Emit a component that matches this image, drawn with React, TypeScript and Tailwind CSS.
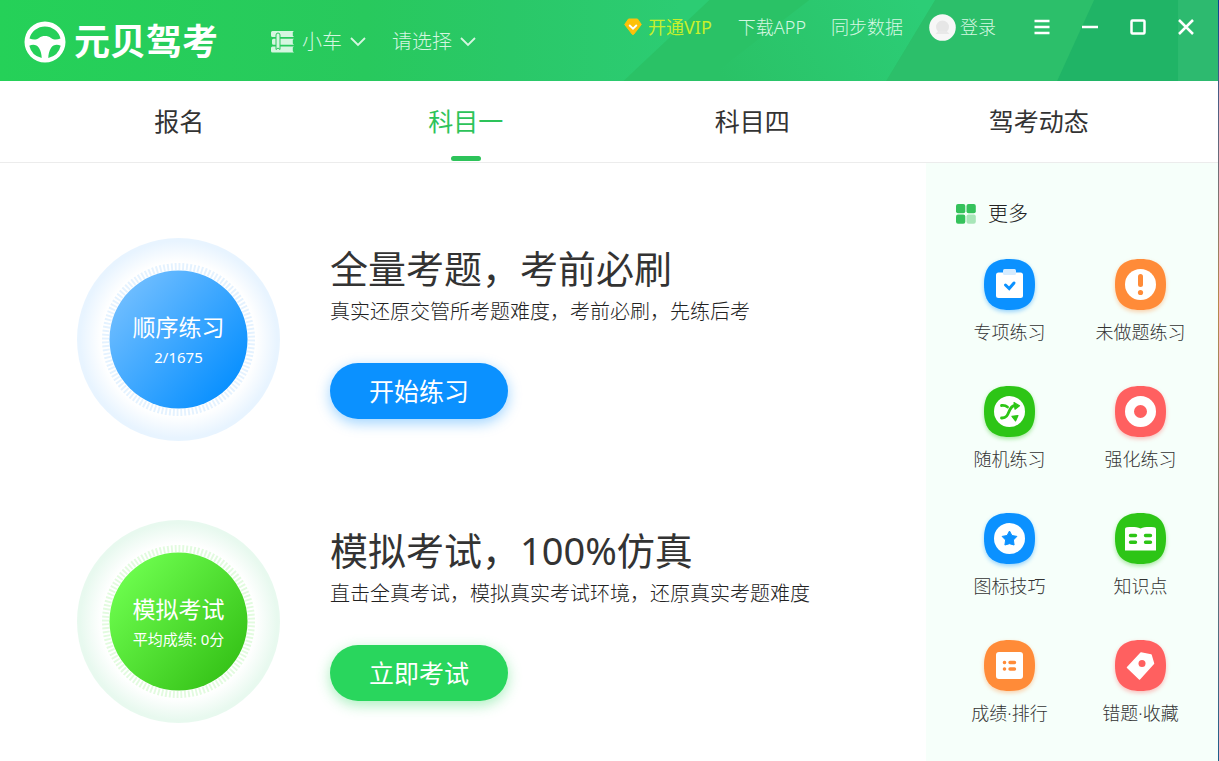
import { ReactNode } from "react";

const subjects = ["报名", "科目一", "科目四", "驾考动态"];

const Chevron = () => (
  <svg
    className="pointer-events-none absolute right-0 top-1/2 -translate-y-1/2"
    width="16"
    height="10"
    viewBox="0 0 16 10"
    fill="none"
    stroke="#d5f6e0"
    strokeWidth="1.8"
  >
    <path d="M1 1l7 7 7-7" />
  </svg>
);

const HeaderBackground = () => (
  <svg
    className="absolute inset-0 h-full w-full"
    viewBox="0 0 1219 81"
    preserveAspectRatio="none"
    aria-hidden="true"
  >
    <defs>
      <linearGradient id="base" x1="0" y1="0" x2="1" y2="0">
        <stop offset="0" stopColor="#25d158" />
        <stop offset="0.3" stopColor="#28c95d" />
        <stop offset="0.42" stopColor="#2ac868" />
        <stop offset="0.56" stopColor="#2ccc73" />
      </linearGradient>
      <linearGradient id="facet" x1="0" y1="0.6" x2="1" y2="0.4">
        <stop offset="0" stopColor="#2ac266" />
        <stop offset="1" stopColor="#2ccd76" />
      </linearGradient>
    </defs>
    <rect width="1219" height="81" fill="url(#base)" />
    <path d="M710 0h509v81H624z" fill="#2ac266" />
    <path d="M810 0h126l-49 81H705z" fill="url(#facet)" />
    <path d="M936 0h283v81H887z" fill="#2cbf6a" />
    <path d="M1095 0h124v81h-161z" fill="#20b466" />
    <path d="M1179 0h40v81h-40z" fill="#2dba6f" />
  </svg>
);

const Logo = () => (
  <div className="flex items-center gap-2">
    <svg width="42" height="42" viewBox="0 0 42 42" aria-hidden="true">
      <path
        fill="#fff"
        fillRule="evenodd"
        d="M21 .5a20.500 20.500 0 010 41 20.500 20.500 0 010-41zM5.500 17.500C9 18.800 12 19 15 17c3.500-2.600 8.500-2.600 12 0 3 2 6 1.800 9.500.5A16 16 0 005.500 17.500zM5.300 24.800C8.500 23 13 23.500 15 27c1.800 3 2.700 6.500 2.700 10A16.300 16.300 0 015.300 24.800zM36.700 24.800C33.500 23 29 23.500 27 27c-1.800 3-2.700 6.500-2.700 10A16.300 16.300 0 0036.700 24.800z"
      />
    </svg>
    <span className="text-4xl font-bold leading-[42px] text-white">元贝驾考</span>
  </div>
);

const BooksIcon = () => (
  <svg width="23" height="22" viewBox="0 0 23 22" aria-hidden="true">
    <path
      fill="#d5f6e0"
      d="M1.500 0H23l-1.200 1v3.800L23 6H1.500A1.500 1.500 0 010 4.500v-3A1.500 1.500 0 011.500 0zM2.500 7.800H23l-1.200 1v3.800l1.200 1.200H2.500A1.500 1.500 0 011 12.300v-3a1.500 1.500 0 011.500-1.500zM1.500 15.500H23l-1.200 1v3.800l1.200 1.200H1.500A1.500 1.500 0 010 20v-3a1.500 1.500 0 011.500-1.500z"
    />
    <path
      d="M5 4a2 2 0 014 0v14.500l-2-1.500-2 1.500z"
      fill="#d5f6e0"
      stroke="#2ac95e"
      strokeWidth="1"
    />
  </svg>
);

const HeaderSelect = ({ label, options }: { label: string; options: string[] }) => (
  <div className="relative">
    <select
      aria-label={label}
      className="block appearance-none bg-transparent pr-6 text-xl font-light leading-7 text-[#d5f6e0] outline-none"
    >
      {options.map((o) => (
        <option key={o}>{o}</option>
      ))}
    </select>
    <Chevron />
  </div>
);

const WindowButton = ({ label, children }: { label: string; children: ReactNode }) => (
  <button type="button" aria-label={label} className="flex h-7 w-12 items-center justify-center">
    <svg width="18" height="18" viewBox="0 0 18 18" fill="none" stroke="#fff" strokeWidth="2.5">
      {children}
    </svg>
  </button>
);

const Header = () => (
  <header className="relative h-[81px]">
    <HeaderBackground />
    <div className="relative flex items-start pl-6 pr-2">
      <div className="flex items-center pt-[21px]">
        <Logo />
        <div className="ml-[53px] flex items-center gap-2">
          <BooksIcon />
          <HeaderSelect label="车型" options={["小车"]} />
          <div className="ml-[18px]">
            <HeaderSelect label="地区" options={["请选择"]} />
          </div>
        </div>
      </div>

      <div className="ml-auto flex items-center pt-[13px] text-lg font-light leading-7 text-[#d5f8e2]">
        <a href="#vip" className="flex items-center gap-1.5 font-normal text-[#c6f02c]">
          <svg width="18" height="18" viewBox="0 0 18 18" aria-hidden="true">
            <path
              d="M4.500 1h9L17.300 6.500 9.700 16.300a1 1 0 01-1.400 0L.700 6.500z"
              fill="#fdc10a"
              stroke="#fdc10a"
              strokeLinejoin="round"
            />
            <path d="M5.200 7l3.800 3.700L12.800 7" fill="none" stroke="#fff" strokeWidth="1.800" />
          </svg>
          开通VIP
        </a>
        <a href="#app" className="ml-[26px]">
          下载APP
        </a>
        <a href="#sync" className="ml-[25px]">
          同步数据
        </a>
        <a href="#login" className="ml-[26px] flex items-center gap-1">
          <svg width="27" height="27" viewBox="0 0 27 27" aria-hidden="true">
            <circle cx="13.500" cy="13.500" r="13.300" fill="#f7f7f7" />
            <circle cx="13.500" cy="13" r="6.500" fill="#e6e6e6" />
            <path d="M6.500 20c2-3 4-3.500 7-3.500s5 .5 7 3.500z" fill="#e9e9e9" />
          </svg>
          登录
        </a>
        <div className="ml-[22px] flex">
          <WindowButton label="菜单">
            <path d="M1.500 3h15M1.500 9h15M1.500 15h15" />
          </WindowButton>
          <WindowButton label="最小化">
            <path d="M1 9h16" />
          </WindowButton>
          <WindowButton label="最大化">
            <rect x="2.500" y="2.500" width="13" height="13" rx="1" />
          </WindowButton>
          <WindowButton label="关闭">
            <path d="M2 2l14 14M16 2L2 16" />
          </WindowButton>
        </div>
      </div>
    </div>
  </header>
);

const Dial = ({
  id,
  title,
  detail,
  from,
  to,
  halo,
  tick,
}: {
  id: string;
  title: string;
  detail: string;
  from: string;
  to: string;
  halo: string;
  tick: string;
}) => (
  <div className="grid shrink-0 place-items-center">
    <svg className="col-start-1 row-start-1" width="203" height="203" viewBox="0 0 203 203">
      <defs>
        <linearGradient id={id} x1="0.1" y1="0.2" x2="0.85" y2="0.85">
          <stop offset="0" stopColor={from} />
          <stop offset="1" stopColor={to} />
        </linearGradient>
        <radialGradient id={`${id}-halo`}>
          <stop offset="0.76" stopColor="#fff" />
          <stop offset="0.97" stopColor={halo} />
        </radialGradient>
      </defs>
      <circle cx="101.500" cy="101.500" r="101.500" fill={`url(#${id}-halo)`} />
      <circle
        cx="101.500"
        cy="101.500"
        r="73"
        fill="none"
        stroke={tick}
        strokeWidth="7"
        pathLength="240"
        strokeDasharray="1 1"
      />
      <circle cx="101.500" cy="101.500" r="69" fill={`url(#${id})`} />
    </svg>
    <div className="col-start-1 row-start-1 pt-1 text-center text-white">
      <div className="text-[23px] leading-[30px]">{title}</div>
      <div className="text-[15px] leading-[30px]">{detail}</div>
    </div>
  </div>
);

const Pane = ({
  dial,
  title,
  text,
  action,
  buttonClass,
}: {
  dial: ReactNode;
  title: string;
  text: string;
  action: string;
  buttonClass: string;
}) => (
  <section className="flex items-start gap-[50px]">
    {dial}
    <div className="pt-2">
      <h2 className="text-[38px] leading-[44px] text-[#333]">{title}</h2>
      <p className="mt-1 text-xl font-light leading-9 text-[#222]">{text}</p>
      <button
        type="button"
        className={`mt-[33px] h-14 w-[178px] rounded-full pt-0.5 text-[25px] text-white ${buttonClass}`}
      >
        {action}
      </button>
    </div>
  </section>
);

const tools: { name: string; color: string; glyph: ReactNode }[] = [
  {
    name: "专项练习",
    color: "#0b91ff",
    glyph: (
      <>
        <rect x="12" y="13.500" width="27" height="25.500" rx="2.500" fill="#fff" />
        <rect x="19" y="10" width="13" height="6" rx="1.500" fill="#d5ebff" />
        <path
          d="M21.500 26l3.700 3.500 4.800-5.500"
          fill="none"
          stroke="#0b91ff"
          strokeWidth="3"
          strokeLinecap="round"
        />
      </>
    ),
  },
  {
    name: "未做题练习",
    color: "#ff8b38",
    glyph: (
      <>
        <circle cx="25.500" cy="25.500" r="15.500" fill="#fff" />
        <path d="M25.500 17.500v8" stroke="#ff8b38" strokeWidth="5" strokeLinecap="round" />
        <circle cx="25.500" cy="33.500" r="2.600" fill="#ff8b38" />
      </>
    ),
  },
  {
    name: "随机练习",
    color: "#2dc516",
    glyph: (
      <>
        <circle cx="25.500" cy="25.500" r="15.500" fill="#fff" />
        <path
          d="M17.500 19.500c3-.3 4.500.2 6 1.500M17.500 32c9 .5 6-11.500 13-12.500"
          fill="none"
          stroke="#2dc516"
          strokeWidth="2.800"
          strokeLinecap="round"
        />
        <path
          d="M30 16.500l5.500 3.300-4.500 3.400zM28 30.300l6-.8-2.500 5.500z"
          fill="#2dc516"
          stroke="#2dc516"
          strokeWidth="1.200"
          strokeLinejoin="round"
        />
      </>
    ),
  },
  {
    name: "强化练习",
    color: "#ff6060",
    glyph: <circle cx="25.500" cy="25.500" r="11" fill="none" stroke="#fff" strokeWidth="9" />,
  },
  {
    name: "图标技巧",
    color: "#0b91ff",
    glyph: (
      <>
        <circle cx="25.500" cy="25.500" r="15.500" fill="#fff" />
        <path
          d="M25.500 18l2.400 4.500 5 .9-3.500 3.600.7 5-4.600-1.300-4.600 1.300.7-5-3.500-3.600 5-.9z"
          fill="#0b91ff"
          stroke="#0b91ff"
          strokeLinejoin="round"
        />
      </>
    ),
  },
  {
    name: "知识点",
    color: "#2dc516",
    glyph: (
      <>
        <path
          d="M10 16.500c0-1.500.8-2 2-2.200 4.500-.6 9.500-.6 13.500 1.200 4-1.800 9-1.800 13.500-1.200 1.200.2 2 .7 2 2.200V37.500H10z"
          fill="#fff"
        />
        <path
          d="M15.500 22.500h5M15.500 29.200h5M30.500 22.500h5M30.500 29.200h5"
          stroke="#2dc516"
          strokeWidth="3.400"
          strokeLinecap="round"
        />
      </>
    ),
  },
  {
    name: "成绩·排行",
    color: "#ff8b38",
    glyph: (
      <>
        <rect x="12" y="12" width="27" height="27" rx="3" fill="#fff" />
        <path
          d="M20.400 22.500h.2M20.400 29h.2M26 22.500h4.500M26 29h4.500"
          stroke="#ff8b38"
          strokeWidth="3.400"
          strokeLinecap="round"
        />
      </>
    ),
  },
  {
    name: "错题·收藏",
    color: "#ff6060",
    glyph: (
      <>
        <path
          d="M26 13l10 2 2.500 8.500L24.500 39 12.500 27.500z"
          fill="#fff"
          stroke="#fff"
          strokeWidth="1.500"
          strokeLinejoin="round"
        />
        <circle cx="27" cy="23.500" r="3.500" fill="#ff6060" />
      </>
    ),
  },
];

const Sidebar = () => (
  <aside className="w-[292px] shrink-0 bg-[#f6fffa] pt-[37px]">
    <h3 className="flex items-center gap-3 pl-[30px] text-xl font-light leading-7 text-[#222]">
      <svg width="20" height="20" viewBox="0 0 20 20" fill="#35c25b" aria-hidden="true">
        <rect width="9.300" height="9.300" rx="2" />
        <rect x="10.500" width="9.300" height="9.300" rx="2" />
        <rect y="10.500" width="9.300" height="9.300" rx="2" />
        <rect x="10.500" y="10.500" width="9.300" height="9.300" rx="2" fill="#a8e6b8" />
      </svg>
      更多
    </h3>
    <div className="mt-[31px] grid grid-cols-2 gap-y-10 pl-[18px] pr-3">
      {tools.map((t) => (
        <button key={t.name} type="button" className="flex flex-col items-center gap-2">
          <svg className="overflow-visible" width="51" height="51" viewBox="0 0 51 51">
            <path
              d="M25.500 0C43 0 51 8 51 25.500S43 51 25.500 51 0 43 0 25.500 8 0 25.500 0z"
              fill={t.color}
              style={{ filter: `drop-shadow(0 2px 2px ${t.color}66)` }}
            />
            {t.glyph}
          </svg>
          <span className="text-lg font-light leading-7 text-[#333]">{t.name}</span>
        </button>
      ))}
    </div>
  </aside>
);

export default function App() {
  return (
    <div className="flex min-h-screen bg-white font-['Noto_Sans','Noto_Sans_CJK_SC',sans-serif]">
      <div className="flex min-w-0 flex-1 flex-col">
        <Header />

        <nav className="flex h-[82px] border-b border-[#ececec] px-9">
          {subjects.map((s) => (
            <a
              key={s}
              href={`#${s}`}
              className={`flex flex-1 flex-col items-center justify-between pb-px pt-5 text-[25px] leading-10 ${
                s === "科目一" ? "text-[#2dc35a]" : "text-[#333]"
              }`}
            >
              {s}
              {s === "科目一" && <span className="h-[5px] w-[30px] rounded-full bg-[#2dc35a]" />}
            </a>
          ))}
        </nav>

        <div className="flex flex-1">
          <main className="flex flex-1 flex-col gap-[79px] pl-[77px] pt-[75px]">
            <Pane
              dial={
                <Dial
                  id="practice"
                  title="顺序练习"
                  detail="2/1675"
                  from="#6cbcff"
                  to="#0b91ff"
                  halo="#e8f4ff"
                  tick="#e4f2ff"
                />
              }
              title="全量考题，考前必刷"
              text="真实还原交管所考题难度，考前必刷，先练后考"
              action="开始练习"
              buttonClass="bg-[#0b91ff] shadow-[0_4px_14px_rgba(11,145,255,0.4)]"
            />
            <Pane
              dial={
                <Dial
                  id="exam"
                  title="模拟考试"
                  detail="平均成绩: 0分"
                  from="#6bfb4c"
                  to="#38c51a"
                  halo="#e8f9ef"
                  tick="#e2fbdf"
                />
              }
              title="模拟考试，100%仿真"
              text="直击全真考试，模拟真实考试环境，还原真实考题难度"
              action="立即考试"
              buttonClass="bg-[#29d65d] shadow-[0_4px_14px_rgba(41,214,93,0.4)]"
            />
          </main>
          <Sidebar />
        </div>
      </div>

      {/* sliver of the desktop behind the window */}
      <div className="w-px shrink-0 bg-linear-to-b from-[#0b3f94] via-[#b8894a] via-40% to-[#1c5f8c]" />
    </div>
  );
}
